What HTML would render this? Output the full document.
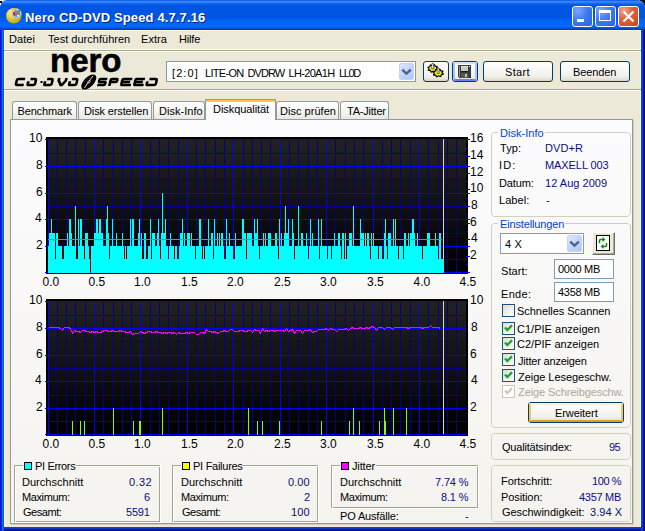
<!DOCTYPE html><html><head><meta charset="utf-8"><style>
html,body{margin:0;padding:0;overflow:hidden}
body{width:645px;height:531px;overflow:hidden;position:relative;background:#ECE9D8;font-family:"Liberation Sans", sans-serif}
.t{position:absolute;white-space:nowrap;line-height:1;font-family:"Liberation Sans", sans-serif}
</style></head><body>
<div style="position:absolute;left:0px;top:0px;width:645px;height:30px;background:linear-gradient(to bottom,#0A48D8 0.00%,#2B7BFF 3.33%,#3A8CFF 6.67%,#2274F5 10.00%,#0A60E8 13.33%,#0055E3 20.00%,#0055E3 56.67%,#0062F5 66.67%,#0068FF 86.67%,#0058F0 93.33%,#0040C0 96.67%,#0040C0 100.00%);border-radius:7px 7px 0 0"></div>
<div style="position:absolute;left:640px;top:0px;width:5px;height:1px;background:#111"></div>
<div style="position:absolute;left:642px;top:1px;width:3px;height:1px;background:#111"></div>
<div style="position:absolute;left:643px;top:2px;width:2px;height:1px;background:#111"></div>
<div style="position:absolute;left:644px;top:3px;width:1px;height:2px;background:#111"></div>
<div style="position:absolute;left:0px;top:0px;width:4px;height:1px;background:#fff"></div>
<div style="position:absolute;left:0px;top:1px;width:2px;height:2px;background:#000"></div>
<div style="position:absolute;left:0px;top:3px;width:1px;height:2px;background:#fff"></div>
<div style="position:absolute;left:0px;top:30px;width:1px;height:501px;background:#0019CF"></div>
<div style="position:absolute;left:1px;top:30px;width:1px;height:501px;background:#0831D9"></div>
<div style="position:absolute;left:2px;top:30px;width:1px;height:501px;background:#166AEE"></div>
<div style="position:absolute;left:3px;top:30px;width:1px;height:501px;background:#0855DD"></div>
<div style="position:absolute;left:641px;top:30px;width:1px;height:501px;background:#0842E8"></div>
<div style="position:absolute;left:642px;top:30px;width:1px;height:501px;background:#0836D8"></div>
<div style="position:absolute;left:643px;top:30px;width:1px;height:501px;background:#001EA0"></div>
<div style="position:absolute;left:644px;top:30px;width:1px;height:501px;background:#001385"></div>
<div style="position:absolute;left:4px;top:527px;width:637px;height:1px;background:#0842E0"></div>
<div style="position:absolute;left:4px;top:528px;width:637px;height:1px;background:#0836D8"></div>
<div style="position:absolute;left:4px;top:529px;width:637px;height:1px;background:#001EA0"></div>
<div style="position:absolute;left:4px;top:530px;width:637px;height:1px;background:#001385"></div>
<div style="position:absolute;left:4px;top:30px;width:637px;height:1px;background:#FFF7DD"></div>
<div style="position:absolute;left:4px;top:30px;width:1px;height:497px;background:#FFF7DD"></div>
<div style="position:absolute;left:640px;top:30px;width:1px;height:497px;background:#FFF7DD"></div>
<svg style="position:absolute;left:5px;top:7px" width="18" height="18" viewBox="0 0 18 18">
<defs><radialGradient id="cdg" cx="35%" cy="30%" r="75%"><stop offset="0" stop-color="#F8F0A0"/><stop offset="0.45" stop-color="#E6D040"/><stop offset="1" stop-color="#C0A010"/></radialGradient></defs>
<circle cx="8.8" cy="8.8" r="7.7" fill="url(#cdg)"/>
<circle cx="11.6" cy="6.4" r="4.6" fill="#E8ECF0" stroke="#A0A0A8" stroke-width="0.8"/>
<circle cx="11.8" cy="6.6" r="3.4" fill="#3C9CE0"/>
<path d="M10 3.2 L12 6.2 L14.2 7.8" stroke="#F06030" stroke-width="1.5" fill="none"/>
<path d="M13.5 3 L15 4.5" stroke="#30A040" stroke-width="1.4"/>
<path d="M8.6 5 L9.5 8.5" stroke="#C01010" stroke-width="1.6"/>
<circle cx="9" cy="4.8" r="0.8" fill="#F0D000"/>
<circle cx="13.2" cy="8.8" r="1" fill="#FFFFFF"/>
</svg>
<div class="t" style="left:26.00px;top:12px;font-size:13px;color:#0A1E6E;font-weight:bold;font-style:normal;letter-spacing:0.132px;opacity:0.9">Nero CD-DVD Speed 4.7.7.16</div>
<div class="t" style="left:25.00px;top:11px;font-size:13px;color:#fff;font-weight:bold;font-style:normal;letter-spacing:0.132px;">Nero CD-DVD Speed 4.7.7.16</div>
<div style="position:absolute;left:572px;top:6px;width:21px;height:21px;box-sizing:border-box;border:1px solid #fff;border-radius:3px;background:radial-gradient(circle at 25% 20%, #7FA6FF 0%, #3E7BF5 45%, #2B5FDC 100%)"></div>
<div style="position:absolute;left:577px;top:19px;width:7px;height:3px;background:#fff"></div>
<div style="position:absolute;left:595px;top:6px;width:21px;height:21px;box-sizing:border-box;border:1px solid #fff;border-radius:3px;background:radial-gradient(circle at 25% 20%, #7FA6FF 0%, #3E7BF5 45%, #2B5FDC 100%)"></div>
<div style="position:absolute;left:599px;top:10px;width:12px;height:11px;box-sizing:border-box;border:1px solid #fff;border-top-width:3px"></div>
<div style="position:absolute;left:618px;top:6px;width:21px;height:21px;box-sizing:border-box;border:1px solid #fff;border-radius:3px;background:radial-gradient(circle at 25% 20%, #F0A58C 0%, #E0643C 40%, #CC4415 100%)"></div>
<svg style="position:absolute;left:618px;top:6px" width="21" height="21"><path d="M5.5 5.5 L15.5 15.5 M15.5 5.5 L5.5 15.5" stroke="#fff" stroke-width="2.2"/></svg>
<div class="t" style="left:9.00px;top:34px;font-size:11px;color:#000;font-weight:normal;font-style:normal;letter-spacing:0.075px;">Datei</div>
<div class="t" style="left:48.00px;top:34px;font-size:11px;color:#000;font-weight:normal;font-style:normal;letter-spacing:0.020px;">Test durchführen</div>
<div class="t" style="left:141.00px;top:34px;font-size:11px;color:#000;font-weight:normal;font-style:normal;letter-spacing:0.075px;">Extra</div>
<div class="t" style="left:179.00px;top:34px;font-size:11px;color:#000;font-weight:normal;font-style:normal;letter-spacing:-0.175px;">Hilfe</div>
<div style="position:absolute;left:4px;top:49px;width:637px;height:1px;background:#fff"></div>
<div style="position:absolute;left:4px;top:50px;width:637px;height:1px;background:#ACA899"></div>
<div style="position:absolute;left:4px;top:51px;width:637px;height:1px;background:#fff"></div>
<div style="position:absolute;left:4px;top:89px;width:637px;height:1px;background:#ACA899"></div>
<div style="position:absolute;left:4px;top:90px;width:637px;height:1px;background:#fff"></div>
<div class="t" id="nero" style="left:50px;top:44px;font-size:33px;font-weight:bold;letter-spacing:0px;-webkit-text-stroke:0.6px #000;color:#000">nero</div>
<svg style="position:absolute;left:0;top:0" width="170" height="92"><g fill="none" stroke="#000" stroke-width="2.6" stroke-linejoin="round">
<path transform="translate(16.3 78) skewX(-12.7)" d="M9.0 1 H2.5 Q1 1 1 2.5 V5.5 Q1 7 2.5 7 H9.0"/>
<path transform="translate(28.1 78) skewX(-12.7)" d="M2.6 1 H6.799999999999999 Q8.299999999999999 1 8.299999999999999 2.5 V5.5 Q8.299999999999999 7 6.799999999999999 7 H2 Q1 7 1 6 V3.2"/>
<path transform="translate(44.8 78) skewX(-12.7)" d="M2.6 1 H6.699999999999999 Q8.2 1 8.2 2.5 V5.5 Q8.2 7 6.699999999999999 7 H2 Q1 7 1 6 V3.2"/>
<path transform="translate(58.3 78) skewX(-12.7)" d="M1 0 V2.5 L3.9999999999999996 7 H5.199999999999999 L8.2 2.5 V0"/>
<path transform="translate(69.6 78) skewX(-12.7)" d="M2.6 1 H6.6 Q8.1 1 8.1 2.5 V5.5 Q8.1 7 6.6 7 H2 Q1 7 1 6 V3.2"/>
<path transform="translate(98.8 78) skewX(-12.7)" d="M8.7 1 H2 Q1 1 1 2 V3 Q1 4 2 4 H6.699999999999999 Q7.699999999999999 4 7.699999999999999 5 V6 Q7.699999999999999 7 6.699999999999999 7 H0"/>
<path transform="translate(110.1 78) skewX(-12.7)" d="M1 8 V2 Q1 1 2 1 H6.699999999999999 Q7.699999999999999 1 7.699999999999999 2 V3 Q7.699999999999999 4 6.699999999999999 4 H1"/>
<path transform="translate(121.8 78) skewX(-12.7)" d="M10.7 1 H2 Q1 1 1 2 V6 Q1 7 2 7 H10.7 M1 4 H9.2"/>
<path transform="translate(134.8 78) skewX(-12.7)" d="M10.399999999999999 1 H2 Q1 1 1 2 V6 Q1 7 2 7 H10.399999999999999 M1 4 H8.899999999999999"/>
<path transform="translate(147.10000000000002 78) skewX(-12.7)" d="M2.6 1 H8.6 Q10.1 1 10.1 2.5 V5.5 Q10.1 7 8.6 7 H2 Q1 7 1 6 V3.2"/>
</g><rect x="40.5" y="81" width="2" height="2" fill="#000"/>
<g transform="translate(88.8 82) rotate(-45)"><ellipse rx="9.4" ry="4.9" fill="#000"/><path d="M-7.5 1.2 Q0 -0.6 7.5 -1.4" stroke="#ECE9D8" stroke-width="0.9" fill="none"/><ellipse cx="0.3" cy="0" rx="1.7" ry="1.3" fill="#ECE9D8"/><ellipse cx="0.3" cy="0" rx="0.8" ry="0.6" fill="#000"/></g>
</svg>
<div style="position:absolute;left:166px;top:61px;width:250px;height:21px;box-sizing:border-box;border:1px solid #7F9DB9;background:#fff"></div>
<div style="position:absolute;left:399px;top:63px;width:15px;height:17px;box-sizing:border-box;border:1px solid #C3D3FD;border-radius:2px;background:linear-gradient(135deg,#DDE8FE,#C0D3FC 55%,#AFC6F9)"></div>
<svg style="position:absolute;left:399px;top:63px" width="15" height="17"><path d="M3.2 6.7 L7.5 10.7 L11.8 6.7" stroke="#4D6185" stroke-width="2.4" fill="none"/></svg>
<div class="t" style="left:172.00px;top:68px;font-size:11px;color:#000;font-weight:normal;font-style:normal;letter-spacing:1.075px;">[2:0]</div>
<div class="t" style="left:205.00px;top:68px;font-size:11px;color:#000;font-weight:normal;font-style:normal;letter-spacing:-0.700px;">LITE-ON</div>
<div class="t" style="left:247.50px;top:68px;font-size:11px;color:#000;font-weight:normal;font-style:normal;letter-spacing:-0.925px;">DVDRW</div>
<div class="t" style="left:288.50px;top:68px;font-size:11px;color:#000;font-weight:normal;font-style:normal;letter-spacing:-0.671px;">LH-20A1H</div>
<div class="t" style="left:339.00px;top:68px;font-size:11px;color:#000;font-weight:normal;font-style:normal;letter-spacing:-1.400px;">LL0D</div>
<div style="position:absolute;left:423px;top:61px;width:26px;height:21px;box-sizing:border-box;border:1px solid #003C74;border-radius:3px;background:linear-gradient(to bottom,#FFFFFF 0%,#FAFAF8 30%,#F0EFEA 75%,#E3E0D6 92%,#D6D0C5 100%)"></div>
<div style="position:absolute;left:452px;top:61px;width:26px;height:21px;box-sizing:border-box;border:1px solid #003C74;border-radius:3px;background:linear-gradient(to bottom,#FFFFFF 0%,#FAFAF8 30%,#F0EFEA 75%,#E3E0D6 92%,#D6D0C5 100%)"></div>
<div style="position:absolute;left:453px;top:62px;width:24px;height:19px;box-sizing:border-box;border:2px solid #A8C4F6;border-top-color:#CEE7FF;border-bottom-color:#6982EE;border-radius:2px"></div>
<svg style="position:absolute;left:426px;top:61px" width="20" height="20" viewBox="0 0 20 20">
<polygon points="11.70,8.15 11.41,8.87 9.91,8.99 9.44,9.42 9.56,10.57 8.70,10.92 7.52,10.20 6.79,10.25 5.81,11.12 4.87,10.91 4.71,9.76 4.14,9.41 2.63,9.50 2.17,8.84 3.12,7.95 3.05,7.39 1.90,6.65 2.19,5.93 3.69,5.81 4.16,5.38 4.04,4.23 4.90,3.88 6.08,4.60 6.81,4.55 7.79,3.68 8.73,3.89 8.89,5.04 9.46,5.39 10.97,5.30 11.43,5.96 10.48,6.85 10.55,7.41" fill="#F4F000" stroke="#000" stroke-width="1.1" stroke-linejoin="round"/>
<polygon points="17.30,12.77 17.00,13.51 15.43,13.63 14.95,14.08 15.07,15.25 14.17,15.61 12.95,14.87 12.19,14.92 11.17,15.82 10.19,15.60 10.02,14.43 9.43,14.06 7.87,14.15 7.39,13.48 8.37,12.56 8.30,11.99 7.10,11.23 7.40,10.49 8.97,10.37 9.45,9.92 9.33,8.75 10.23,8.39 11.45,9.13 12.21,9.08 13.23,8.18 14.21,8.40 14.38,9.57 14.97,9.94 16.53,9.85 17.01,10.52 16.03,11.44 16.10,12.01" fill="#F4F000" stroke="#000" stroke-width="1.1" stroke-linejoin="round"/>
<path d="M5.8 7.8 V3.2 L6.8 1.8 L7.8 3.2 V7.8 Z" fill="#9A9AA8" stroke="#333" stroke-width="0.6"/>
<rect x="6.3" y="3.2" width="0.7" height="4.2" fill="#fff"/>
<path d="M11.2 12.4 V7.8 L12.2 6.4 L13.2 7.8 V12.4 Z" fill="#9A9AA8" stroke="#333" stroke-width="0.6"/>
<rect x="11.7" y="7.8" width="0.7" height="4.2" fill="#fff"/>
</svg>
<svg style="position:absolute;left:458px;top:65px" width="13" height="13" viewBox="0 0 13 13" shape-rendering="crispEdges">
<rect x="0" y="0" width="13" height="13" fill="#3A3A3A"/>
<rect x="1" y="1" width="1" height="11" fill="#8A8A8A"/>
<rect x="3" y="1" width="7" height="6" fill="#C8C8C8"/>
<rect x="3" y="1" width="7" height="1" fill="#E4E4E4"/>
<rect x="3" y="6" width="7" height="1" fill="#1A1A1A"/>
<rect x="11" y="1" width="1" height="1" fill="#FFFFFF"/>
<rect x="3" y="8" width="7" height="5" fill="#555555"/>
<rect x="7" y="9" width="2" height="3" fill="#BDBDBD"/>
<rect x="0" y="12" width="1" height="1" fill="#FFFFFF"/>
</svg>
<div style="position:absolute;left:483px;top:61px;width:70px;height:21px;box-sizing:border-box;border:1px solid #003C74;border-radius:3px;background:linear-gradient(to bottom,#FFFFFF 0%,#FAFAF8 30%,#F0EFEA 75%,#E3E0D6 92%,#D6D0C5 100%)"></div>
<div class="t" style="left:505.00px;top:67px;font-size:11px;color:#000;font-weight:normal;font-style:normal;letter-spacing:0.325px;">Start</div>
<div style="position:absolute;left:560px;top:61px;width:70px;height:21px;box-sizing:border-box;border:1px solid #003C74;border-radius:3px;background:linear-gradient(to bottom,#FFFFFF 0%,#FAFAF8 30%,#F0EFEA 75%,#E3E0D6 92%,#D6D0C5 100%)"></div>
<div class="t" style="left:573.00px;top:67px;font-size:11px;color:#000;font-weight:normal;font-style:normal;letter-spacing:-0.117px;">Beenden</div>
<div style="position:absolute;left:12px;top:101px;width:65px;height:19px;box-sizing:border-box;border:1px solid #919B9C;border-bottom:none;border-radius:3px 3px 0 0;background:linear-gradient(to bottom,#FFFFFF,#F3F3EF 60%,#E7E6DF)"></div>
<div class="t" style="left:17.50px;top:106px;font-size:11px;color:#000;font-weight:normal;font-style:normal;letter-spacing:-0.150px;">Benchmark</div>
<div style="position:absolute;left:78px;top:101px;width:74px;height:19px;box-sizing:border-box;border:1px solid #919B9C;border-bottom:none;border-radius:3px 3px 0 0;background:linear-gradient(to bottom,#FFFFFF,#F3F3EF 60%,#E7E6DF)"></div>
<div class="t" style="left:84.00px;top:106px;font-size:11px;color:#000;font-weight:normal;font-style:normal;letter-spacing:-0.131px;">Disk erstellen</div>
<div style="position:absolute;left:153px;top:101px;width:52px;height:19px;box-sizing:border-box;border:1px solid #919B9C;border-bottom:none;border-radius:3px 3px 0 0;background:linear-gradient(to bottom,#FFFFFF,#F3F3EF 60%,#E7E6DF)"></div>
<div class="t" style="left:159.00px;top:106px;font-size:11px;color:#000;font-weight:normal;font-style:normal;letter-spacing:0.037px;">Disk-Info</div>
<div style="position:absolute;left:276px;top:101px;width:63px;height:19px;box-sizing:border-box;border:1px solid #919B9C;border-bottom:none;border-radius:3px 3px 0 0;background:linear-gradient(to bottom,#FFFFFF,#F3F3EF 60%,#E7E6DF)"></div>
<div class="t" style="left:280.00px;top:106px;font-size:11px;color:#000;font-weight:normal;font-style:normal;letter-spacing:0.030px;">Disc prüfen</div>
<div style="position:absolute;left:340px;top:101px;width:49px;height:19px;box-sizing:border-box;border:1px solid #919B9C;border-bottom:none;border-radius:3px 3px 0 0;background:linear-gradient(to bottom,#FFFFFF,#F3F3EF 60%,#E7E6DF)"></div>
<div class="t" style="left:347.00px;top:106px;font-size:11px;color:#000;font-weight:normal;font-style:normal;letter-spacing:-0.213px;">TA-Jitter</div>
<div style="position:absolute;left:10px;top:119px;width:623px;height:405px;box-sizing:border-box;border:1px solid #919B9C;background:linear-gradient(to bottom,#FCFCFE,#F4F3EE)"></div>
<div style="position:absolute;left:633px;top:120px;width:1px;height:404px;background:#D0CEBF"></div>
<div style="position:absolute;left:11px;top:524px;width:623px;height:1px;background:#D0CEBF"></div>
<div style="position:absolute;left:205px;top:99px;width:71px;height:21px;box-sizing:border-box;border:1px solid #919B9C;border-top:none;border-bottom:none;background:#FCFCFE"></div>
<div style="position:absolute;left:205px;top:99px;width:71px;height:1px;background:#E68B2C;border-radius:3px 3px 0 0"></div>
<div style="position:absolute;left:206px;top:100px;width:69px;height:2px;background:#FFC73C"></div>
<div class="t" style="left:213.00px;top:104px;font-size:11px;color:#000;font-weight:normal;font-style:normal;letter-spacing:-0.064px;">Diskqualität</div>
<svg style="position:absolute;left:0;top:0" width="645" height="531" shape-rendering="crispEdges">
<defs><linearGradient id="bg1" x1="0" y1="0" x2="0" y2="1"><stop offset="0" stop-color="#222222"/><stop offset="1" stop-color="#000"/></linearGradient></defs>
<rect x="46" y="137" width="422" height="137" fill="#000"/>
<rect x="48" y="139" width="418" height="133" fill="url(#bg1)"/>
<rect x="48" y="139" width="1" height="135" fill="#0000FF"/>
<rect x="57" y="139" width="1" height="135" fill="#000092"/>
<rect x="66" y="139" width="1" height="135" fill="#000092"/>
<rect x="75" y="139" width="1" height="135" fill="#000092"/>
<rect x="85" y="139" width="1" height="135" fill="#000092"/>
<rect x="94" y="139" width="1" height="135" fill="#0000FF"/>
<rect x="103" y="139" width="1" height="135" fill="#000092"/>
<rect x="113" y="139" width="1" height="135" fill="#000092"/>
<rect x="122" y="139" width="1" height="135" fill="#000092"/>
<rect x="131" y="139" width="1" height="135" fill="#000092"/>
<rect x="140" y="139" width="1" height="135" fill="#0000FF"/>
<rect x="150" y="139" width="1" height="135" fill="#000092"/>
<rect x="159" y="139" width="1" height="135" fill="#000092"/>
<rect x="168" y="139" width="1" height="135" fill="#000092"/>
<rect x="178" y="139" width="1" height="135" fill="#000092"/>
<rect x="187" y="139" width="1" height="135" fill="#0000FF"/>
<rect x="196" y="139" width="1" height="135" fill="#000092"/>
<rect x="205" y="139" width="1" height="135" fill="#000092"/>
<rect x="215" y="139" width="1" height="135" fill="#000092"/>
<rect x="224" y="139" width="1" height="135" fill="#000092"/>
<rect x="233" y="139" width="1" height="135" fill="#0000FF"/>
<rect x="243" y="139" width="1" height="135" fill="#000092"/>
<rect x="252" y="139" width="1" height="135" fill="#000092"/>
<rect x="261" y="139" width="1" height="135" fill="#000092"/>
<rect x="270" y="139" width="1" height="135" fill="#000092"/>
<rect x="280" y="139" width="1" height="135" fill="#0000FF"/>
<rect x="289" y="139" width="1" height="135" fill="#000092"/>
<rect x="298" y="139" width="1" height="135" fill="#000092"/>
<rect x="308" y="139" width="1" height="135" fill="#000092"/>
<rect x="317" y="139" width="1" height="135" fill="#000092"/>
<rect x="326" y="139" width="1" height="135" fill="#0000FF"/>
<rect x="335" y="139" width="1" height="135" fill="#000092"/>
<rect x="345" y="139" width="1" height="135" fill="#000092"/>
<rect x="354" y="139" width="1" height="135" fill="#000092"/>
<rect x="363" y="139" width="1" height="135" fill="#000092"/>
<rect x="373" y="139" width="1" height="135" fill="#0000FF"/>
<rect x="382" y="139" width="1" height="135" fill="#000092"/>
<rect x="391" y="139" width="1" height="135" fill="#000092"/>
<rect x="400" y="139" width="1" height="135" fill="#000092"/>
<rect x="410" y="139" width="1" height="135" fill="#000092"/>
<rect x="419" y="139" width="1" height="135" fill="#0000FF"/>
<rect x="428" y="139" width="1" height="135" fill="#000092"/>
<rect x="438" y="139" width="1" height="135" fill="#000092"/>
<rect x="447" y="139" width="1" height="135" fill="#000092"/>
<rect x="456" y="139" width="1" height="135" fill="#000092"/>
<rect x="45" y="272" width="425" height="1" fill="#0000FF"/>
<rect x="48" y="259" width="418" height="1" fill="#000092"/>
<rect x="45" y="246" width="425" height="1" fill="#0000FF"/>
<rect x="48" y="233" width="418" height="1" fill="#000092"/>
<rect x="45" y="219" width="425" height="1" fill="#0000FF"/>
<rect x="48" y="206" width="418" height="1" fill="#000092"/>
<rect x="45" y="193" width="425" height="1" fill="#0000FF"/>
<rect x="48" y="179" width="418" height="1" fill="#000092"/>
<rect x="45" y="166" width="425" height="1" fill="#0000FF"/>
<rect x="48" y="153" width="418" height="1" fill="#000092"/>
<rect x="45" y="139" width="425" height="1" fill="#0000FF"/>
<rect x="466" y="272" width="4" height="1" fill="#0000FF"/>
<rect x="466" y="264" width="2" height="1" fill="#0000FF"/>
<rect x="466" y="256" width="4" height="1" fill="#0000FF"/>
<rect x="466" y="248" width="2" height="1" fill="#0000FF"/>
<rect x="466" y="239" width="4" height="1" fill="#0000FF"/>
<rect x="466" y="231" width="2" height="1" fill="#0000FF"/>
<rect x="466" y="223" width="4" height="1" fill="#0000FF"/>
<rect x="466" y="214" width="2" height="1" fill="#0000FF"/>
<rect x="466" y="206" width="4" height="1" fill="#0000FF"/>
<rect x="466" y="198" width="2" height="1" fill="#0000FF"/>
<rect x="466" y="189" width="4" height="1" fill="#0000FF"/>
<rect x="466" y="181" width="2" height="1" fill="#0000FF"/>
<rect x="466" y="173" width="4" height="1" fill="#0000FF"/>
<rect x="466" y="164" width="2" height="1" fill="#0000FF"/>
<rect x="466" y="156" width="4" height="1" fill="#0000FF"/>
<rect x="466" y="148" width="2" height="1" fill="#0000FF"/>
<rect x="466" y="139" width="4" height="1" fill="#0000FF"/>
<rect x="443" y="139" width="1" height="133" fill="#D8D8D8"/>
<path d="M48 246h1V273h-1z M49 233h1V273h-1z M50 233h1V273h-1z M51 219h1V273h-1z M52 233h1V273h-1z M53 233h1V273h-1z M54 233h1V273h-1z M55 259h1V273h-1z M56 233h1V273h-1z M57 233h1V273h-1z M58 246h1V273h-1z M59 246h1V273h-1z M60 246h1V273h-1z M61 246h1V273h-1z M62 259h1V273h-1z M63 259h1V273h-1z M64 246h1V273h-1z M65 246h1V273h-1z M66 246h1V273h-1z M67 233h1V273h-1z M68 246h1V273h-1z M69 219h1V273h-1z M70 219h1V273h-1z M71 233h1V273h-1z M72 246h1V273h-1z M73 246h1V273h-1z M74 246h1V273h-1z M75 206h1V273h-1z M76 259h1V273h-1z M77 259h1V273h-1z M78 219h1V273h-1z M79 246h1V273h-1z M80 219h1V273h-1z M81 219h1V273h-1z M82 246h1V273h-1z M83 246h1V273h-1z M84 259h1V273h-1z M85 233h1V273h-1z M86 233h1V273h-1z M87 233h1V273h-1z M88 246h1V273h-1z M89 259h1V273h-1z M91 246h1V273h-1z M92 246h1V273h-1z M93 246h1V273h-1z M94 233h1V273h-1z M95 233h1V273h-1z M96 219h1V273h-1z M97 219h1V273h-1z M98 233h1V273h-1z M99 219h1V273h-1z M100 219h1V273h-1z M101 233h1V273h-1z M102 233h1V273h-1z M103 246h1V273h-1z M104 246h1V273h-1z M105 246h1V273h-1z M106 219h1V273h-1z M107 206h1V273h-1z M108 233h1V273h-1z M109 259h1V273h-1z M110 246h1V273h-1z M111 246h1V273h-1z M112 219h1V273h-1z M113 246h1V273h-1z M114 246h1V273h-1z M115 246h1V273h-1z M116 233h1V273h-1z M117 246h1V273h-1z M118 246h1V273h-1z M119 246h1V273h-1z M120 246h1V273h-1z M121 246h1V273h-1z M122 233h1V273h-1z M123 246h1V273h-1z M124 259h1V273h-1z M125 246h1V273h-1z M126 259h1V273h-1z M127 246h1V273h-1z M128 246h1V273h-1z M129 246h1V273h-1z M130 219h1V273h-1z M131 246h1V273h-1z M132 219h1V273h-1z M133 219h1V273h-1z M134 246h1V273h-1z M135 246h1V273h-1z M136 246h1V273h-1z M137 246h1V273h-1z M138 233h1V273h-1z M139 219h1V273h-1z M140 246h1V273h-1z M141 233h1V273h-1z M142 259h1V273h-1z M143 259h1V273h-1z M144 233h1V273h-1z M145 233h1V273h-1z M146 259h1V273h-1z M147 259h1V273h-1z M148 246h1V273h-1z M149 246h1V273h-1z M150 219h1V273h-1z M151 259h1V273h-1z M152 233h1V273h-1z M153 233h1V273h-1z M154 233h1V273h-1z M155 246h1V273h-1z M156 246h1V273h-1z M157 233h1V273h-1z M158 219h1V273h-1z M159 246h1V273h-1z M160 259h1V273h-1z M161 233h1V273h-1z M162 193h1V273h-1z M163 233h1V273h-1z M164 233h1V273h-1z M165 219h1V273h-1z M166 246h1V273h-1z M167 246h1V273h-1z M168 259h1V273h-1z M169 246h1V273h-1z M170 233h1V273h-1z M171 246h1V273h-1z M172 246h1V273h-1z M173 246h1V273h-1z M174 259h1V273h-1z M175 246h1V273h-1z M176 246h1V273h-1z M177 259h1V273h-1z M178 259h1V273h-1z M179 246h1V273h-1z M180 233h1V273h-1z M181 233h1V273h-1z M182 219h1V273h-1z M183 246h1V273h-1z M184 233h1V273h-1z M185 246h1V273h-1z M186 246h1V273h-1z M187 233h1V273h-1z M188 233h1V273h-1z M189 233h1V273h-1z M190 246h1V273h-1z M191 233h1V273h-1z M192 246h1V273h-1z M193 246h1V273h-1z M194 246h1V273h-1z M195 259h1V273h-1z M196 246h1V273h-1z M197 246h1V273h-1z M198 246h1V273h-1z M199 219h1V273h-1z M200 219h1V273h-1z M201 246h1V273h-1z M202 259h1V273h-1z M203 246h1V273h-1z M204 259h1V273h-1z M205 246h1V273h-1z M206 246h1V273h-1z M207 246h1V273h-1z M208 219h1V273h-1z M209 246h1V273h-1z M210 246h1V273h-1z M211 233h1V273h-1z M212 233h1V273h-1z M213 259h1V273h-1z M214 219h1V273h-1z M215 246h1V273h-1z M216 246h1V273h-1z M217 233h1V273h-1z M218 246h1V273h-1z M219 233h1V273h-1z M220 246h1V273h-1z M221 233h1V273h-1z M222 233h1V273h-1z M223 246h1V273h-1z M224 259h1V273h-1z M225 259h1V273h-1z M226 219h1V273h-1z M227 246h1V273h-1z M228 246h1V273h-1z M229 233h1V273h-1z M230 246h1V273h-1z M231 246h1V273h-1z M232 246h1V273h-1z M233 259h1V273h-1z M234 259h1V273h-1z M235 233h1V273h-1z M236 246h1V273h-1z M237 246h1V273h-1z M238 246h1V273h-1z M239 246h1V273h-1z M240 246h1V273h-1z M241 246h1V273h-1z M242 219h1V273h-1z M243 219h1V273h-1z M244 233h1V273h-1z M245 233h1V273h-1z M246 259h1V273h-1z M247 233h1V273h-1z M248 233h1V273h-1z M249 233h1V273h-1z M250 233h1V273h-1z M251 233h1V273h-1z M252 246h1V273h-1z M253 246h1V273h-1z M254 219h1V273h-1z M255 233h1V273h-1z M256 233h1V273h-1z M257 219h1V273h-1z M258 246h1V273h-1z M259 259h1V273h-1z M260 246h1V273h-1z M261 246h1V273h-1z M262 246h1V273h-1z M263 233h1V273h-1z M264 246h1V273h-1z M265 233h1V273h-1z M266 246h1V273h-1z M267 246h1V273h-1z M268 233h1V273h-1z M269 233h1V273h-1z M270 233h1V273h-1z M271 246h1V273h-1z M272 246h1V273h-1z M273 246h1V273h-1z M274 246h1V273h-1z M275 233h1V273h-1z M276 233h1V273h-1z M277 246h1V273h-1z M278 259h1V273h-1z M279 219h1V273h-1z M280 246h1V273h-1z M281 233h1V273h-1z M282 246h1V273h-1z M283 246h1V273h-1z M284 233h1V273h-1z M285 206h1V273h-1z M286 233h1V273h-1z M287 233h1V273h-1z M288 219h1V273h-1z M289 246h1V273h-1z M290 246h1V273h-1z M291 246h1V273h-1z M292 219h1V273h-1z M293 233h1V273h-1z M294 259h1V273h-1z M295 246h1V273h-1z M296 246h1V273h-1z M297 246h1V273h-1z M298 206h1V273h-1z M299 246h1V273h-1z M300 246h1V273h-1z M301 233h1V273h-1z M302 233h1V273h-1z M303 246h1V273h-1z M304 246h1V273h-1z M305 246h1V273h-1z M306 233h1V273h-1z M307 246h1V273h-1z M308 259h1V273h-1z M309 246h1V273h-1z M310 219h1V273h-1z M311 246h1V273h-1z M312 233h1V273h-1z M313 246h1V273h-1z M314 246h1V273h-1z M315 246h1V273h-1z M316 246h1V273h-1z M317 246h1V273h-1z M318 219h1V273h-1z M319 259h1V273h-1z M320 246h1V273h-1z M321 219h1V273h-1z M322 246h1V273h-1z M323 246h1V273h-1z M324 246h1V273h-1z M325 246h1V273h-1z M326 246h1V273h-1z M327 259h1V273h-1z M328 246h1V273h-1z M329 246h1V273h-1z M330 246h1V273h-1z M331 259h1V273h-1z M332 246h1V273h-1z M333 246h1V273h-1z M334 233h1V273h-1z M335 246h1V273h-1z M336 246h1V273h-1z M337 246h1V273h-1z M338 233h1V273h-1z M339 233h1V273h-1z M340 246h1V273h-1z M341 259h1V273h-1z M342 233h1V273h-1z M343 233h1V273h-1z M344 259h1V273h-1z M345 233h1V273h-1z M346 259h1V273h-1z M347 246h1V273h-1z M348 246h1V273h-1z M349 233h1V273h-1z M350 233h1V273h-1z M351 233h1V273h-1z M352 246h1V273h-1z M353 206h1V273h-1z M354 246h1V273h-1z M355 246h1V273h-1z M356 246h1V273h-1z M357 246h1V273h-1z M358 246h1V273h-1z M359 246h1V273h-1z M360 219h1V273h-1z M361 233h1V273h-1z M362 233h1V273h-1z M363 233h1V273h-1z M364 246h1V273h-1z M365 233h1V273h-1z M366 246h1V273h-1z M367 233h1V273h-1z M368 233h1V273h-1z M369 246h1V273h-1z M370 259h1V273h-1z M371 233h1V273h-1z M372 246h1V273h-1z M373 233h1V273h-1z M374 246h1V273h-1z M375 246h1V273h-1z M376 246h1V273h-1z M377 246h1V273h-1z M378 259h1V273h-1z M379 246h1V273h-1z M380 246h1V273h-1z M381 246h1V273h-1z M382 259h1V273h-1z M383 259h1V273h-1z M384 233h1V273h-1z M385 219h1V273h-1z M386 246h1V273h-1z M387 259h1V273h-1z M388 233h1V273h-1z M389 233h1V273h-1z M390 233h1V273h-1z M391 246h1V273h-1z M392 246h1V273h-1z M393 219h1V273h-1z M394 246h1V273h-1z M395 219h1V273h-1z M396 246h1V273h-1z M397 246h1V273h-1z M398 259h1V273h-1z M399 246h1V273h-1z M400 246h1V273h-1z M401 246h1V273h-1z M402 246h1V273h-1z M403 259h1V273h-1z M404 233h1V273h-1z M405 233h1V273h-1z M406 246h1V273h-1z M407 246h1V273h-1z M408 233h1V273h-1z M409 246h1V273h-1z M410 233h1V273h-1z M411 233h1V273h-1z M412 219h1V273h-1z M413 219h1V273h-1z M414 233h1V273h-1z M415 246h1V273h-1z M416 246h1V273h-1z M417 233h1V273h-1z M418 246h1V273h-1z M419 246h1V273h-1z M420 246h1V273h-1z M421 246h1V273h-1z M422 259h1V273h-1z M423 246h1V273h-1z M424 246h1V273h-1z M425 246h1V273h-1z M426 246h1V273h-1z M427 233h1V273h-1z M428 233h1V273h-1z M429 233h1V273h-1z M430 246h1V273h-1z M431 246h1V273h-1z M432 246h1V273h-1z M433 246h1V273h-1z M434 246h1V273h-1z M435 233h1V273h-1z M436 246h1V273h-1z M437 246h1V273h-1z M438 259h1V273h-1z M439 233h1V273h-1z M440 233h1V273h-1z M441 259h1V273h-1z M442 259h1V273h-1z M443 259h1V273h-1z" fill="#00FFFF"/>
<rect x="48" y="239" width="394" height="1" fill="#00E000"/>
<rect x="53" y="240" width="1" height="1" fill="#00E000"/>
</svg>
<div class="t" style="left:29.00px;top:132px;font-size:12px;color:#000;font-weight:normal;font-style:normal;letter-spacing:0.000px;">10</div>
<div class="t" style="left:36.00px;top:159px;font-size:12px;color:#000;font-weight:normal;font-style:normal;letter-spacing:0.000px;">8</div>
<div class="t" style="left:36.00px;top:186px;font-size:12px;color:#000;font-weight:normal;font-style:normal;letter-spacing:0.000px;">6</div>
<div class="t" style="left:35.00px;top:212px;font-size:12px;color:#000;font-weight:normal;font-style:normal;letter-spacing:0.000px;">4</div>
<div class="t" style="left:36.00px;top:239px;font-size:12px;color:#000;font-weight:normal;font-style:normal;letter-spacing:0.000px;">2</div>
<div class="t" style="left:470.00px;top:132px;font-size:12px;color:#000;font-weight:normal;font-style:normal;letter-spacing:0.000px;">16</div>
<div class="t" style="left:470.00px;top:149px;font-size:12px;color:#000;font-weight:normal;font-style:normal;letter-spacing:0.000px;">14</div>
<div class="t" style="left:470.00px;top:166px;font-size:12px;color:#000;font-weight:normal;font-style:normal;letter-spacing:0.000px;">12</div>
<div class="t" style="left:470.00px;top:182px;font-size:12px;color:#000;font-weight:normal;font-style:normal;letter-spacing:0.000px;">10</div>
<div class="t" style="left:471.00px;top:199px;font-size:12px;color:#000;font-weight:normal;font-style:normal;letter-spacing:0.000px;">8</div>
<div class="t" style="left:470.00px;top:216px;font-size:12px;color:#000;font-weight:normal;font-style:normal;letter-spacing:0.000px;">6</div>
<div class="t" style="left:471.00px;top:232px;font-size:12px;color:#000;font-weight:normal;font-style:normal;letter-spacing:0.000px;">4</div>
<div class="t" style="left:470.00px;top:249px;font-size:12px;color:#000;font-weight:normal;font-style:normal;letter-spacing:0.000px;">2</div>
<div class="t" style="left:42.50px;top:276px;font-size:12px;color:#000;font-weight:normal;font-style:normal;letter-spacing:0.000px;">0.0</div>
<div class="t" style="left:88.50px;top:276px;font-size:12px;color:#000;font-weight:normal;font-style:normal;letter-spacing:0.000px;">0.5</div>
<div class="t" style="left:134.00px;top:276px;font-size:12px;color:#000;font-weight:normal;font-style:normal;letter-spacing:0.000px;">1.0</div>
<div class="t" style="left:181.00px;top:276px;font-size:12px;color:#000;font-weight:normal;font-style:normal;letter-spacing:0.000px;">1.5</div>
<div class="t" style="left:227.00px;top:276px;font-size:12px;color:#000;font-weight:normal;font-style:normal;letter-spacing:0.000px;">2.0</div>
<div class="t" style="left:274.00px;top:276px;font-size:12px;color:#000;font-weight:normal;font-style:normal;letter-spacing:0.000px;">2.5</div>
<div class="t" style="left:320.00px;top:276px;font-size:12px;color:#000;font-weight:normal;font-style:normal;letter-spacing:0.000px;">3.0</div>
<div class="t" style="left:367.00px;top:276px;font-size:12px;color:#000;font-weight:normal;font-style:normal;letter-spacing:0.000px;">3.5</div>
<div class="t" style="left:413.50px;top:276px;font-size:12px;color:#000;font-weight:normal;font-style:normal;letter-spacing:0.000px;">4.0</div>
<div class="t" style="left:459.50px;top:276px;font-size:12px;color:#000;font-weight:normal;font-style:normal;letter-spacing:0.000px;">4.5</div>
<svg style="position:absolute;left:0;top:0" width="645" height="531" shape-rendering="crispEdges">
<defs><linearGradient id="bg2" x1="0" y1="0" x2="0" y2="1"><stop offset="0" stop-color="#222222"/><stop offset="1" stop-color="#000"/></linearGradient></defs>
<rect x="46" y="299" width="422" height="137" fill="#000"/>
<rect x="48" y="301" width="418" height="133" fill="url(#bg2)"/>
<rect x="48" y="301" width="1" height="135" fill="#0000FF"/>
<rect x="57" y="301" width="1" height="135" fill="#000092"/>
<rect x="66" y="301" width="1" height="135" fill="#000092"/>
<rect x="75" y="301" width="1" height="135" fill="#000092"/>
<rect x="85" y="301" width="1" height="135" fill="#000092"/>
<rect x="94" y="301" width="1" height="135" fill="#0000FF"/>
<rect x="103" y="301" width="1" height="135" fill="#000092"/>
<rect x="113" y="301" width="1" height="135" fill="#000092"/>
<rect x="122" y="301" width="1" height="135" fill="#000092"/>
<rect x="131" y="301" width="1" height="135" fill="#000092"/>
<rect x="140" y="301" width="1" height="135" fill="#0000FF"/>
<rect x="150" y="301" width="1" height="135" fill="#000092"/>
<rect x="159" y="301" width="1" height="135" fill="#000092"/>
<rect x="168" y="301" width="1" height="135" fill="#000092"/>
<rect x="178" y="301" width="1" height="135" fill="#000092"/>
<rect x="187" y="301" width="1" height="135" fill="#0000FF"/>
<rect x="196" y="301" width="1" height="135" fill="#000092"/>
<rect x="205" y="301" width="1" height="135" fill="#000092"/>
<rect x="215" y="301" width="1" height="135" fill="#000092"/>
<rect x="224" y="301" width="1" height="135" fill="#000092"/>
<rect x="233" y="301" width="1" height="135" fill="#0000FF"/>
<rect x="243" y="301" width="1" height="135" fill="#000092"/>
<rect x="252" y="301" width="1" height="135" fill="#000092"/>
<rect x="261" y="301" width="1" height="135" fill="#000092"/>
<rect x="270" y="301" width="1" height="135" fill="#000092"/>
<rect x="280" y="301" width="1" height="135" fill="#0000FF"/>
<rect x="289" y="301" width="1" height="135" fill="#000092"/>
<rect x="298" y="301" width="1" height="135" fill="#000092"/>
<rect x="308" y="301" width="1" height="135" fill="#000092"/>
<rect x="317" y="301" width="1" height="135" fill="#000092"/>
<rect x="326" y="301" width="1" height="135" fill="#0000FF"/>
<rect x="335" y="301" width="1" height="135" fill="#000092"/>
<rect x="345" y="301" width="1" height="135" fill="#000092"/>
<rect x="354" y="301" width="1" height="135" fill="#000092"/>
<rect x="363" y="301" width="1" height="135" fill="#000092"/>
<rect x="373" y="301" width="1" height="135" fill="#0000FF"/>
<rect x="382" y="301" width="1" height="135" fill="#000092"/>
<rect x="391" y="301" width="1" height="135" fill="#000092"/>
<rect x="400" y="301" width="1" height="135" fill="#000092"/>
<rect x="410" y="301" width="1" height="135" fill="#000092"/>
<rect x="419" y="301" width="1" height="135" fill="#0000FF"/>
<rect x="428" y="301" width="1" height="135" fill="#000092"/>
<rect x="438" y="301" width="1" height="135" fill="#000092"/>
<rect x="447" y="301" width="1" height="135" fill="#000092"/>
<rect x="456" y="301" width="1" height="135" fill="#000092"/>
<rect x="45" y="434" width="421" height="1" fill="#0000FF"/>
<rect x="48" y="421" width="418" height="1" fill="#000092"/>
<rect x="45" y="408" width="421" height="1" fill="#0000FF"/>
<rect x="48" y="395" width="418" height="1" fill="#000092"/>
<rect x="45" y="381" width="421" height="1" fill="#0000FF"/>
<rect x="48" y="368" width="418" height="1" fill="#000092"/>
<rect x="45" y="355" width="421" height="1" fill="#0000FF"/>
<rect x="48" y="341" width="418" height="1" fill="#000092"/>
<rect x="45" y="328" width="421" height="1" fill="#0000FF"/>
<rect x="48" y="315" width="418" height="1" fill="#000092"/>
<rect x="45" y="301" width="421" height="1" fill="#0000FF"/>
<rect x="443" y="301" width="1" height="133" fill="#D8D8D8"/>
<rect x="72" y="421" width="1" height="14" fill="#80FF00"/>
<rect x="80" y="421" width="1" height="14" fill="#80FF00"/>
<rect x="84" y="421" width="1" height="14" fill="#80FF00"/>
<rect x="113" y="408" width="1" height="27" fill="#80FF00"/>
<rect x="133" y="421" width="1" height="14" fill="#80FF00"/>
<rect x="139" y="421" width="1" height="14" fill="#80FF00"/>
<rect x="140" y="421" width="1" height="14" fill="#80FF00"/>
<rect x="162" y="408" width="1" height="27" fill="#80FF00"/>
<rect x="248" y="408" width="1" height="27" fill="#80FF00"/>
<rect x="257" y="421" width="1" height="14" fill="#80FF00"/>
<rect x="262" y="421" width="1" height="14" fill="#80FF00"/>
<rect x="279" y="421" width="1" height="14" fill="#80FF00"/>
<rect x="321" y="421" width="1" height="14" fill="#80FF00"/>
<rect x="349" y="421" width="1" height="14" fill="#80FF00"/>
<rect x="353" y="408" width="1" height="27" fill="#80FF00"/>
<rect x="359" y="421" width="1" height="14" fill="#80FF00"/>
<rect x="379" y="421" width="1" height="14" fill="#80FF00"/>
<rect x="384" y="408" width="1" height="27" fill="#80FF00"/>
<rect x="385" y="421" width="1" height="14" fill="#80FF00"/>
<rect x="393" y="408" width="1" height="27" fill="#80FF00"/>
<rect x="406" y="408" width="1" height="27" fill="#80FF00"/>
<polyline points="48.5,327.5 50.5,327.5 52.5,327.5 54.5,327.5 56.5,327.5 58.5,327.5 60.5,328.5 62.5,330.5 64.5,327.5 66.5,327.5 68.5,327.5 70.5,328.5 72.5,333.5 74.5,330.5 76.5,331.5 78.5,331.5 80.5,332.5 82.5,330.5 84.5,330.5 86.5,331.5 88.5,331.5 90.5,332.5 92.5,331.5 94.5,332.5 96.5,331.5 98.5,332.5 100.5,332.5 102.5,331.5 104.5,330.5 106.5,330.5 108.5,331.5 110.5,331.5 112.5,330.5 114.5,331.5 116.5,331.5 118.5,331.5 120.5,330.5 122.5,331.5 124.5,331.5 126.5,332.5 128.5,332.5 130.5,331.5 132.5,334.5 134.5,333.5 136.5,333.5 138.5,333.5 140.5,331.5 142.5,332.5 144.5,333.5 146.5,332.5 148.5,331.5 150.5,331.5 152.5,332.5 154.5,332.5 156.5,331.5 158.5,332.5 160.5,332.5 162.5,333.5 164.5,332.5 166.5,333.5 168.5,332.5 170.5,332.5 172.5,333.5 174.5,332.5 176.5,334.5 178.5,332.5 180.5,333.5 182.5,333.5 184.5,333.5 186.5,332.5 188.5,333.5 190.5,332.5 192.5,332.5 194.5,332.5 196.5,334.5 198.5,334.5 200.5,332.5 202.5,332.5 204.5,333.5 206.5,329.5 208.5,331.5 210.5,331.5 212.5,332.5 214.5,331.5 216.5,332.5 218.5,333.5 220.5,331.5 222.5,331.5 224.5,330.5 226.5,331.5 228.5,331.5 230.5,329.5 232.5,329.5 234.5,331.5 236.5,331.5 238.5,331.5 240.5,330.5 242.5,330.5 244.5,331.5 246.5,331.5 248.5,330.5 250.5,330.5 252.5,332.5 254.5,329.5 256.5,330.5 258.5,330.5 260.5,333.5 262.5,328.5 264.5,331.5 266.5,330.5 268.5,331.5 270.5,330.5 272.5,330.5 274.5,331.5 276.5,330.5 278.5,330.5 280.5,330.5 282.5,330.5 284.5,331.5 286.5,328.5 288.5,331.5 290.5,330.5 292.5,329.5 294.5,333.5 296.5,330.5 298.5,330.5 300.5,330.5 302.5,333.5 304.5,330.5 306.5,330.5 308.5,330.5 310.5,329.5 312.5,332.5 314.5,331.5 316.5,331.5 318.5,329.5 320.5,329.5 322.5,329.5 324.5,329.5 326.5,328.5 328.5,330.5 330.5,328.5 332.5,329.5 334.5,329.5 336.5,331.5 338.5,329.5 340.5,329.5 342.5,329.5 344.5,329.5 346.5,328.5 348.5,330.5 350.5,328.5 352.5,327.5 354.5,328.5 356.5,328.5 358.5,328.5 360.5,327.5 362.5,328.5 364.5,328.5 366.5,327.5 368.5,328.5 370.5,327.5 372.5,326.5 374.5,327.5 376.5,330.5 378.5,327.5 380.5,327.5 382.5,327.5 384.5,329.5 386.5,327.5 388.5,327.5 390.5,327.5 392.5,329.5 394.5,327.5 396.5,327.5 398.5,327.5 400.5,327.5 402.5,327.5 404.5,327.5 406.5,327.5 408.5,328.5 410.5,327.5 412.5,327.5 414.5,327.5 416.5,327.5 418.5,327.5 420.5,327.5 422.5,328.5 424.5,327.5 426.5,327.5 428.5,327.5 430.5,325.5 432.5,327.5 434.5,327.5 436.5,327.5 438.5,327.5 440.5,328.5" fill="none" stroke="#FF00FF" stroke-width="1" shape-rendering="crispEdges"/>
<path d="" fill="#FF00FF"/>
</svg>
<div class="t" style="left:29.00px;top:294px;font-size:12px;color:#000;font-weight:normal;font-style:normal;letter-spacing:0.000px;">10</div>
<div class="t" style="left:36.00px;top:321px;font-size:12px;color:#000;font-weight:normal;font-style:normal;letter-spacing:0.000px;">8</div>
<div class="t" style="left:36.00px;top:348px;font-size:12px;color:#000;font-weight:normal;font-style:normal;letter-spacing:0.000px;">6</div>
<div class="t" style="left:35.00px;top:374px;font-size:12px;color:#000;font-weight:normal;font-style:normal;letter-spacing:0.000px;">4</div>
<div class="t" style="left:36.00px;top:401px;font-size:12px;color:#000;font-weight:normal;font-style:normal;letter-spacing:0.000px;">2</div>
<div class="t" style="left:470.00px;top:294px;font-size:12px;color:#000;font-weight:normal;font-style:normal;letter-spacing:0.000px;">10</div>
<div class="t" style="left:471.00px;top:321px;font-size:12px;color:#000;font-weight:normal;font-style:normal;letter-spacing:0.000px;">8</div>
<div class="t" style="left:470.00px;top:348px;font-size:12px;color:#000;font-weight:normal;font-style:normal;letter-spacing:0.000px;">6</div>
<div class="t" style="left:471.00px;top:374px;font-size:12px;color:#000;font-weight:normal;font-style:normal;letter-spacing:0.000px;">4</div>
<div class="t" style="left:470.00px;top:401px;font-size:12px;color:#000;font-weight:normal;font-style:normal;letter-spacing:0.000px;">2</div>
<div class="t" style="left:42.50px;top:438px;font-size:12px;color:#000;font-weight:normal;font-style:normal;letter-spacing:0.000px;">0.0</div>
<div class="t" style="left:88.50px;top:438px;font-size:12px;color:#000;font-weight:normal;font-style:normal;letter-spacing:0.000px;">0.5</div>
<div class="t" style="left:134.00px;top:438px;font-size:12px;color:#000;font-weight:normal;font-style:normal;letter-spacing:0.000px;">1.0</div>
<div class="t" style="left:181.00px;top:438px;font-size:12px;color:#000;font-weight:normal;font-style:normal;letter-spacing:0.000px;">1.5</div>
<div class="t" style="left:227.00px;top:438px;font-size:12px;color:#000;font-weight:normal;font-style:normal;letter-spacing:0.000px;">2.0</div>
<div class="t" style="left:274.00px;top:438px;font-size:12px;color:#000;font-weight:normal;font-style:normal;letter-spacing:0.000px;">2.5</div>
<div class="t" style="left:320.00px;top:438px;font-size:12px;color:#000;font-weight:normal;font-style:normal;letter-spacing:0.000px;">3.0</div>
<div class="t" style="left:367.00px;top:438px;font-size:12px;color:#000;font-weight:normal;font-style:normal;letter-spacing:0.000px;">3.5</div>
<div class="t" style="left:413.50px;top:438px;font-size:12px;color:#000;font-weight:normal;font-style:normal;letter-spacing:0.000px;">4.0</div>
<div class="t" style="left:459.50px;top:438px;font-size:12px;color:#000;font-weight:normal;font-style:normal;letter-spacing:0.000px;">4.5</div>
<svg style="position:absolute;left:0;top:0" width="645" height="531"><path d="M491.5 134.5 L493.5 132.5 H627.5 L630.5 134.5 V213.5 L627.5 216.5 H493.5 L491.5 213.5 Z" fill="none" stroke="#D0D0BF" stroke-width="1"/></svg>
<div style="position:absolute;left:498px;top:131px;width:47px;height:3px;background:#FBFBFB"></div>
<div class="t" style="left:500.00px;top:128px;font-size:11px;color:#0042D2;font-weight:normal;font-style:normal;letter-spacing:0.037px;">Disk-Info</div>
<div class="t" style="left:500.00px;top:143px;font-size:11px;color:#000;font-weight:normal;font-style:normal;letter-spacing:0.100px;">Typ:</div>
<div class="t" style="left:545.00px;top:143px;font-size:11px;color:#0C0C82;font-weight:normal;font-style:normal;letter-spacing:0.075px;">DVD+R</div>
<div class="t" style="left:499.00px;top:160px;font-size:11px;color:#000;font-weight:normal;font-style:normal;letter-spacing:1.150px;">ID:</div>
<div class="t" style="left:545.00px;top:160px;font-size:11px;color:#0C0C82;font-weight:normal;font-style:normal;letter-spacing:-0.078px;">MAXELL 003</div>
<div class="t" style="left:499.00px;top:178px;font-size:11px;color:#000;font-weight:normal;font-style:normal;letter-spacing:-0.140px;">Datum:</div>
<div class="t" style="left:545.00px;top:178px;font-size:11px;color:#0C0C82;font-weight:normal;font-style:normal;letter-spacing:0.030px;">12 Aug 2009</div>
<div class="t" style="left:499.00px;top:195px;font-size:11px;color:#000;font-weight:normal;font-style:normal;letter-spacing:0.060px;">Label:</div>
<div class="t" style="left:546.00px;top:195px;font-size:11px;color:#0C0C82;font-weight:normal;font-style:normal;letter-spacing:0.000px;">-</div>
<svg style="position:absolute;left:0;top:0" width="645" height="531"><path d="M491.5 225.5 L493.5 223.5 H627.5 L630.5 225.5 V424.5 L627.5 427.5 H493.5 L491.5 424.5 Z" fill="none" stroke="#D0D0BF" stroke-width="1"/></svg>
<div style="position:absolute;left:498px;top:222px;width:67px;height:3px;background:#FBFBFB"></div>
<div class="t" style="left:500.00px;top:219px;font-size:11px;color:#0042D2;font-weight:normal;font-style:normal;letter-spacing:-0.142px;">Einstellungen</div>
<div style="position:absolute;left:500px;top:233px;width:84px;height:21px;box-sizing:border-box;border:1px solid #7F9DB9;background:#fff"></div>
<div style="position:absolute;left:567px;top:235px;width:15px;height:17px;box-sizing:border-box;border:1px solid #C3D3FD;border-radius:2px;background:linear-gradient(135deg,#DDE8FE,#C0D3FC 55%,#AFC6F9)"></div>
<svg style="position:absolute;left:567px;top:235px" width="15" height="17"><path d="M3.2 6.7 L7.5 10.7 L11.8 6.7" stroke="#4D6185" stroke-width="2.4" fill="none"/></svg>
<div class="t" style="left:505.00px;top:239px;font-size:11px;color:#000;font-weight:normal;font-style:normal;letter-spacing:0.150px;">4 X</div>
<div style="position:absolute;left:592px;top:232px;width:23px;height:23px;box-sizing:border-box;border:1px solid;border-color:#FFFFFF #716F64 #716F64 #FFFFFF;background:#ECE9D8"></div>
<div style="position:absolute;left:593px;top:233px;width:21px;height:21px;box-sizing:border-box;border-right:1px solid #ACA899;border-bottom:1px solid #ACA899"></div>
<div style="position:absolute;left:596px;top:235px;width:14px;height:16px;box-sizing:border-box;border:1px solid #000;background:#fff"></div>
<svg style="position:absolute;left:596px;top:235px" width="14" height="16" viewBox="0 0 14 16">
<path d="M3.5 8 V5.5 Q3.5 4.5 4.5 4.5 H7" stroke="#0A8A0A" stroke-width="1.5" fill="none"/>
<path d="M6.5 2 L9.5 4.5 L6.5 7 Z" fill="#0A8A0A"/>
<path d="M10.5 8 V10.5 Q10.5 11.5 9.5 11.5 H7" stroke="#0A8A0A" stroke-width="1.5" fill="none"/>
<path d="M7.5 9 L4.5 11.5 L7.5 14 Z" fill="#0A8A0A"/>
</svg>
<div class="t" style="left:501.00px;top:266px;font-size:11px;color:#000;font-weight:normal;font-style:normal;letter-spacing:0.060px;">Start:</div>
<div style="position:absolute;left:554px;top:259px;width:60px;height:20px;box-sizing:border-box;border:1px solid #7F9DB9;background:#fff"></div>
<div class="t" style="left:558.00px;top:264px;font-size:11px;color:#000;font-weight:normal;font-style:normal;letter-spacing:-0.283px;">0000 MB</div>
<div class="t" style="left:501.00px;top:289px;font-size:11px;color:#000;font-weight:normal;font-style:normal;letter-spacing:0.325px;">Ende:</div>
<div style="position:absolute;left:554px;top:282px;width:60px;height:20px;box-sizing:border-box;border:1px solid #7F9DB9;background:#fff"></div>
<div class="t" style="left:558.00px;top:287px;font-size:11px;color:#000;font-weight:normal;font-style:normal;letter-spacing:-0.283px;">4358 MB</div>
<div style="position:absolute;left:502px;top:304px;width:13px;height:13px;box-sizing:border-box;border:1px solid #1C5180;background:linear-gradient(135deg,#DCDCD7 0%,#F0F0EC 50%,#FFFFFF 100%)"></div>
<div class="t" style="left:517.00px;top:306px;font-size:11px;color:#000;font-weight:normal;font-style:normal;letter-spacing:-0.044px;">Schnelles Scannen</div>
<div style="position:absolute;left:502px;top:322px;width:13px;height:13px;box-sizing:border-box;border:1px solid #1C5180;background:linear-gradient(135deg,#DCDCD7 0%,#F0F0EC 50%,#FFFFFF 100%)"></div>
<svg style="position:absolute;left:502px;top:322px" width="13" height="13"><path d="M3 5.5 L5.3 8 L10 3.3" stroke="#21A121" stroke-width="2.3" fill="none"/></svg>
<div class="t" style="left:517.00px;top:324px;font-size:11px;color:#000;font-weight:normal;font-style:normal;letter-spacing:0.021px;">C1/PIE anzeigen</div>
<div style="position:absolute;left:502px;top:337px;width:13px;height:13px;box-sizing:border-box;border:1px solid #1C5180;background:linear-gradient(135deg,#DCDCD7 0%,#F0F0EC 50%,#FFFFFF 100%)"></div>
<svg style="position:absolute;left:502px;top:337px" width="13" height="13"><path d="M3 5.5 L5.3 8 L10 3.3" stroke="#21A121" stroke-width="2.3" fill="none"/></svg>
<div class="t" style="left:517.00px;top:339px;font-size:11px;color:#000;font-weight:normal;font-style:normal;letter-spacing:0.021px;">C2/PIF anzeigen</div>
<div style="position:absolute;left:502px;top:353px;width:13px;height:13px;box-sizing:border-box;border:1px solid #1C5180;background:linear-gradient(135deg,#DCDCD7 0%,#F0F0EC 50%,#FFFFFF 100%)"></div>
<svg style="position:absolute;left:502px;top:353px" width="13" height="13"><path d="M3 5.5 L5.3 8 L10 3.3" stroke="#21A121" stroke-width="2.3" fill="none"/></svg>
<div class="t" style="left:518.00px;top:356px;font-size:11px;color:#000;font-weight:normal;font-style:normal;letter-spacing:-0.193px;">Jitter anzeigen</div>
<div style="position:absolute;left:502px;top:369px;width:13px;height:13px;box-sizing:border-box;border:1px solid #1C5180;background:linear-gradient(135deg,#DCDCD7 0%,#F0F0EC 50%,#FFFFFF 100%)"></div>
<svg style="position:absolute;left:502px;top:369px" width="13" height="13"><path d="M3 5.5 L5.3 8 L10 3.3" stroke="#21A121" stroke-width="2.3" fill="none"/></svg>
<div class="t" style="left:518.00px;top:372px;font-size:11px;color:#000;font-weight:normal;font-style:normal;letter-spacing:-0.044px;">Zeige Lesegeschw.</div>
<div style="position:absolute;left:502px;top:385px;width:13px;height:13px;box-sizing:border-box;border:1px solid #CAC8BB;background:#fff"></div>
<svg style="position:absolute;left:502px;top:385px" width="13" height="13"><path d="M3 5.5 L5.3 8 L10 3.3" stroke="#CAC8BB" stroke-width="2.3" fill="none"/></svg>
<div class="t" style="left:518.00px;top:387px;font-size:11px;color:#ACA899;font-weight:normal;font-style:normal;letter-spacing:-0.089px;">Zeige Schreibgeschw.</div>
<div style="position:absolute;left:528px;top:402px;width:96px;height:21px;box-sizing:border-box;border:1px solid #003C74;border-radius:3px;background:linear-gradient(to bottom,#FFFFFF 0%,#FAFAF8 30%,#F0EFEA 75%,#E3E0D6 92%,#D6D0C5 100%)"></div>
<div style="position:absolute;left:529px;top:403px;width:94px;height:19px;box-sizing:border-box;border:2px solid #F9C35E;border-top-color:#FFF0CF;border-bottom-color:#E5A01A;border-radius:2px"></div>
<div class="t" style="left:555.00px;top:408px;font-size:11px;color:#000;font-weight:normal;font-style:normal;letter-spacing:-0.088px;">Erweitert</div>
<svg style="position:absolute;left:0;top:0" width="645" height="531"><path d="M491.5 435.5 L493.5 433.5 H627.5 L630.5 435.5 V456.5 L627.5 459.5 H493.5 L491.5 456.5 Z" fill="none" stroke="#D0D0BF" stroke-width="1"/></svg>
<div class="t" style="left:502.00px;top:442px;font-size:11px;color:#000;font-weight:normal;font-style:normal;letter-spacing:-0.193px;">Qualitätsindex:</div>
<div class="t" style="left:609.00px;top:442px;font-size:11px;color:#0C0C82;font-weight:normal;font-style:normal;letter-spacing:-0.700px;">95</div>
<svg style="position:absolute;left:0;top:0" width="645" height="531"><path d="M491.5 467.5 L493.5 465.5 H627.5 L630.5 467.5 V518.5 L627.5 521.5 H493.5 L491.5 518.5 Z" fill="none" stroke="#D0D0BF" stroke-width="1"/></svg>
<div class="t" style="left:501.00px;top:476px;font-size:11px;color:#000;font-weight:normal;font-style:normal;letter-spacing:-0.064px;">Fortschritt:</div>
<div class="t" style="left:592.00px;top:476px;font-size:11px;color:#0C0C82;font-weight:normal;font-style:normal;letter-spacing:-0.425px;">100 %</div>
<div class="t" style="left:501.00px;top:492px;font-size:11px;color:#000;font-weight:normal;font-style:normal;letter-spacing:-0.088px;">Position:</div>
<div class="t" style="left:579.00px;top:492px;font-size:11px;color:#0C0C82;font-weight:normal;font-style:normal;letter-spacing:-0.283px;">4357 MB</div>
<div class="t" style="left:502.00px;top:507px;font-size:11px;color:#000;font-weight:normal;font-style:normal;letter-spacing:-0.047px;">Geschwindigkeit:</div>
<div class="t" style="left:590.00px;top:507px;font-size:11px;color:#0C0C82;font-weight:normal;font-style:normal;letter-spacing:0.060px;">3.94 X</div>
<div style="position:absolute;left:14px;top:465px;width:146px;height:57px;box-sizing:border-box;border:1px solid #A5A290"></div>
<div style="position:absolute;left:15px;top:466px;width:146px;height:57px;box-sizing:border-box;border:1px solid #FFFFFF"></div>
<div style="position:absolute;left:23px;top:461px;width:53px;height:8px;background:#F5F4EF"></div>
<div style="position:absolute;left:24px;top:462px;width:8px;height:8px;box-sizing:border-box;border:1px solid #000;background:#00FFFF"></div>
<div class="t" style="left:35.00px;top:461px;font-size:11px;color:#000;font-weight:normal;font-style:normal;letter-spacing:-0.338px;">PI Errors</div>
<div class="t" style="left:22.00px;top:477px;font-size:11px;color:#000;font-weight:normal;font-style:normal;letter-spacing:0.027px;">Durchschnitt</div>
<div class="t" style="left:129.00px;top:477px;font-size:11px;color:#0C0C82;font-weight:normal;font-style:normal;letter-spacing:0.433px;">0.32</div>
<div class="t" style="left:22.00px;top:492px;font-size:11px;color:#000;font-weight:normal;font-style:normal;letter-spacing:-0.386px;">Maximum:</div>
<div class="t" style="left:144.00px;top:492px;font-size:11px;color:#0C0C82;font-weight:normal;font-style:normal;letter-spacing:0.000px;">6</div>
<div class="t" style="left:23.00px;top:507px;font-size:11px;color:#000;font-weight:normal;font-style:normal;letter-spacing:-0.450px;">Gesamt:</div>
<div class="t" style="left:126.00px;top:507px;font-size:11px;color:#0C0C82;font-weight:normal;font-style:normal;letter-spacing:-0.233px;">5591</div>
<div style="position:absolute;left:172px;top:465px;width:146px;height:57px;box-sizing:border-box;border:1px solid #A5A290"></div>
<div style="position:absolute;left:173px;top:466px;width:146px;height:57px;box-sizing:border-box;border:1px solid #FFFFFF"></div>
<div style="position:absolute;left:181px;top:461px;width:62px;height:8px;background:#F5F4EF"></div>
<div style="position:absolute;left:182px;top:462px;width:8px;height:8px;box-sizing:border-box;border:1px solid #000;background:#FFFF00"></div>
<div class="t" style="left:193.00px;top:461px;font-size:11px;color:#000;font-weight:normal;font-style:normal;letter-spacing:-0.270px;">PI Failures</div>
<div class="t" style="left:181.00px;top:477px;font-size:11px;color:#000;font-weight:normal;font-style:normal;letter-spacing:0.027px;">Durchschnitt</div>
<div class="t" style="left:288.00px;top:477px;font-size:11px;color:#0C0C82;font-weight:normal;font-style:normal;letter-spacing:0.100px;">0.00</div>
<div class="t" style="left:181.00px;top:492px;font-size:11px;color:#000;font-weight:normal;font-style:normal;letter-spacing:-0.386px;">Maximum:</div>
<div class="t" style="left:304.00px;top:492px;font-size:11px;color:#0C0C82;font-weight:normal;font-style:normal;letter-spacing:0.000px;">2</div>
<div class="t" style="left:182.00px;top:507px;font-size:11px;color:#000;font-weight:normal;font-style:normal;letter-spacing:-0.450px;">Gesamt:</div>
<div class="t" style="left:291.00px;top:507px;font-size:11px;color:#0C0C82;font-weight:normal;font-style:normal;letter-spacing:0.150px;">100</div>
<div style="position:absolute;left:331px;top:465px;width:147px;height:43px;box-sizing:border-box;border:1px solid #A5A290"></div>
<div style="position:absolute;left:332px;top:466px;width:147px;height:43px;box-sizing:border-box;border:1px solid #FFFFFF"></div>
<div style="position:absolute;left:340px;top:461px;width:36px;height:8px;background:#F5F4EF"></div>
<div style="position:absolute;left:341px;top:462px;width:8px;height:8px;box-sizing:border-box;border:1px solid #000;background:#FF00FF"></div>
<div class="t" style="left:352.00px;top:461px;font-size:11px;color:#000;font-weight:normal;font-style:normal;letter-spacing:-0.140px;">Jitter</div>
<div class="t" style="left:340.00px;top:477px;font-size:11px;color:#000;font-weight:normal;font-style:normal;letter-spacing:0.027px;">Durchschnitt</div>
<div class="t" style="left:435.00px;top:477px;font-size:11px;color:#0C0C82;font-weight:normal;font-style:normal;letter-spacing:-0.140px;">7.74 %</div>
<div class="t" style="left:340.00px;top:492px;font-size:11px;color:#000;font-weight:normal;font-style:normal;letter-spacing:-0.386px;">Maximum:</div>
<div class="t" style="left:441.00px;top:492px;font-size:11px;color:#0C0C82;font-weight:normal;font-style:normal;letter-spacing:-0.175px;">8.1 %</div>
<div class="t" style="left:340.00px;top:511px;font-size:11px;color:#000;font-weight:normal;font-style:normal;letter-spacing:-0.155px;">PO Ausfälle:</div>
<div class="t" style="left:465.00px;top:511px;font-size:11px;color:#0C0C82;font-weight:normal;font-style:normal;letter-spacing:0.000px;">-</div>
</body></html>
